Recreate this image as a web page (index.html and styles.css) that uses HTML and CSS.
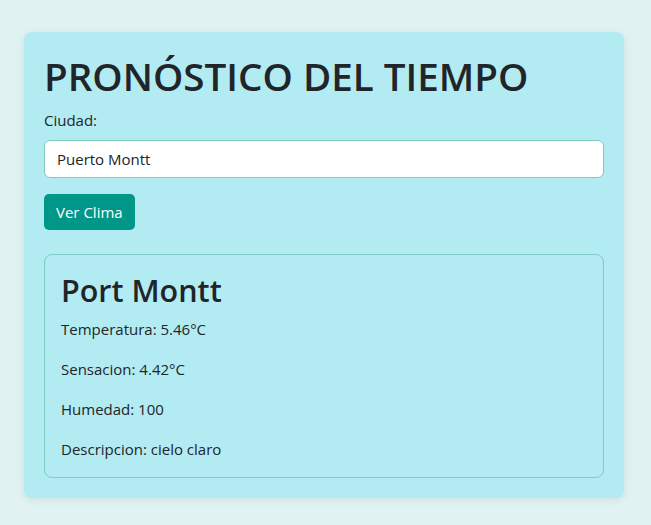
FILE: index.html
```html
<!DOCTYPE html>
<html lang="es">
<head>
<meta charset="utf-8">
<title>Pronóstico del tiempo</title>
<link rel="stylesheet" href="styles.css">
</head>
<body>
<main class="card">
  <h1 class="title">PRONÓSTICO DEL TIEMPO</h1>
  <form class="form">
    <label class="label" for="city">Ciudad:</label>
    <input class="input" id="city" type="text" value="Puerto Montt">
    <button class="btn" type="button">Ver Clima</button>
  </form>
  <section class="result">
    <h2 class="city">Port Montt</h2>
    <p class="line">Temperatura: 5.46°C</p>
    <p class="line">Sensacion: 4.42°C</p>
    <p class="line">Humedad: 100</p>
    <p class="line">Descripcion: cielo claro</p>
  </section>
</main>
</body>
</html>
```
FILE: styles.css
```css
* { box-sizing: border-box; }
html, body { margin: 0; padding: 0; }
body {
  background: #e0f2f1;
  font-family: "Open Sans", "Noto Sans", sans-serif;
  color: #212529;
  font-size: 15px;
  line-height: 24px;
  padding: 32px 0 28px 24px;
}
.card {
  width: 600px;
  background: #b2ebf2;
  border-radius: 8px;
  padding: 20px;
  box-shadow: 0 2px 8px rgba(0,0,0,0.08);
}
.title {
  margin: 0 0 8px;
  font-size: 38.6px;
  font-weight: 600;
  line-height: 48px;
}
.form { display: flex; flex-direction: column; align-items: flex-start; }
.label { display: block; margin-bottom: 8px; }
.input {
  width: 100%;
  height: 38px;
  border: 1px solid #80cbc4;
  border-radius: 6px;
  padding: 6px 12px;
  font: inherit;
  color: #212529;
  background: #fff;
}
.btn {
  margin-top: 16px;
  height: 36px;
  padding: 0 12px;
  background: #009688;
  color: #fff;
  border: none;
  border-radius: 5px;
  font: inherit;
}
.result {
  margin-top: 24px;
  border: 1px solid #80cbc4;
  border-radius: 8px;
  padding: 16px;
}
.city {
  margin: 0 0 8px;
  font-size: 30.5px;
  font-weight: 600;
  line-height: 38px;
}
.line { margin: 0 0 16px; }
.line:last-child { margin-bottom: 0; }
```
